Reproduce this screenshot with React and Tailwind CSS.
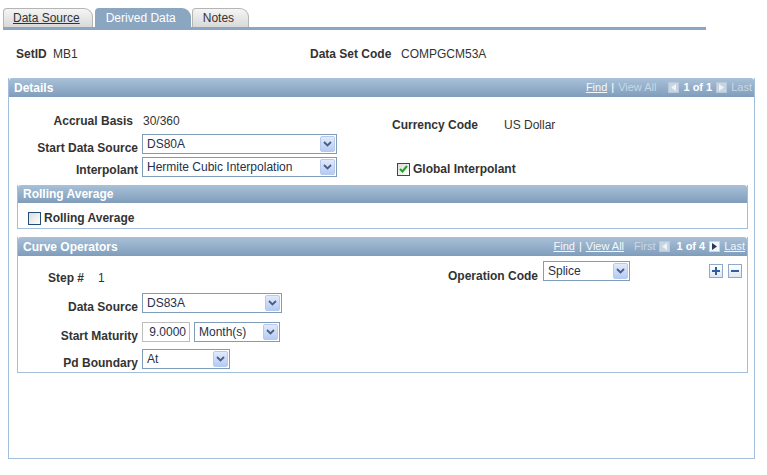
import React from "react";

// small dropdown chevron used in the select buttons
const Chevron = () => (
  <svg width="9" height="6" viewBox="0 0 9 6">
    <path d="M1 1 L4.5 4.5 L8 1" fill="none" stroke="#4b5f82" strokeWidth="1.8" />
  </svg>
);

const Select = ({ w, value }) => (
  <div className={`flex h-[20px] shrink-0 items-center justify-between border border-[#7f9db9] bg-white ${w}`}>
    <span className="pl-[4px] text-[12px] leading-[14px] text-[#26304a]">{value}</span>
    <span className="mr-[1px] flex h-[16px] w-[15px] items-center justify-center rounded-[2px] border border-[#b7c9ee] bg-linear-to-b from-[#e1eafd] to-[#b6cbf3]">
      <Chevron />
    </span>
  </div>
);

const CheckBox = ({ checked }) => (
  <span className="flex h-[13px] w-[13px] shrink-0 items-center justify-center border border-[#1f4e7a] bg-linear-to-br from-[#dcdcdc] to-[#ffffff]">
    {checked && (
      <svg width="9" height="8" viewBox="0 0 9 8">
        <path d="M1 4 L3.5 6.5 L8 1" fill="none" stroke="#22a322" strokeWidth="2" />
      </svg>
    )}
  </span>
);

const NavArrow = ({ dir, active }) => (
  <span
    className={`flex h-[11px] w-[11px] items-center justify-center border ${
      active ? "border-[#c9d7e6] bg-[#f4f7fb]" : "border-[#b9c9da] bg-[#c7d4e2]"
    }`}
  >
    <svg width="5" height="7" viewBox="0 0 5 7">
      {dir === "left" ? (
        <path d="M5 0 L0 3.5 L5 7 Z" fill={active ? "#243a5e" : "#eef3f8"} />
      ) : (
        <path d="M0 0 L5 3.5 L0 7 Z" fill={active ? "#243a5e" : "#eef3f8"} />
      )}
    </svg>
  </span>
);

const Header = ({ title, h, children }) => (
  <div className={`flex items-center justify-between rounded-t-[3px] bg-linear-to-b from-[#a9c1d8] to-[#7f9dbb] pl-[5px] pr-[2px] ${h}`}>
    <span className="text-[12px] font-bold text-white">{title}</span>
    {children}
  </div>
);

const Label = ({ w, pt, children }) => (
  <span className={`shrink-0 text-right text-[12px] font-bold leading-[14px] text-[#333] ${w} ${pt}`}>
    {children}
  </span>
);

export default function App() {
  return (
    <div className="h-[475px] w-[767px] overflow-hidden bg-white font-[Liberation_Sans,Arial,sans-serif] text-[12px] text-[#333]">
      {/* Tabs */}
      <div className="flex items-end gap-[2px] pl-[3px] pt-[8px]">
        <div className="flex h-[19px] items-center rounded-tl-[4px] rounded-tr-[9px] border border-b-0 border-[#b5b5b5] bg-linear-to-b from-[#f5f5f5] to-[#d9d9d9] pl-[9px] pr-[12px]">
          <span className="text-[12px] text-[#333] underline">Data Source</span>
        </div>
        <div className="flex h-[19px] items-center rounded-tl-[4px] rounded-tr-[9px] bg-[#8ba6c1] pl-[11px] pr-[15px]">
          <span className="text-[12px] text-white">Derived Data</span>
        </div>
        <div className="-ml-[1px] flex h-[19px] items-center rounded-tl-[4px] rounded-tr-[9px] border border-b-0 border-[#b5b5b5] bg-linear-to-b from-[#f5f5f5] to-[#d9d9d9] pl-[10px] pr-[14px]">
          <span className="text-[12px] text-[#333]">Notes</span>
        </div>
      </div>
      <div className="ml-[3px] h-[3px] w-[703px] bg-[#8ba6c1]" />

      {/* SetID row */}
      <div className="mt-[17px] flex pl-[16px] leading-[14px]">
        <span className="w-[37px] font-bold">SetID</span>
        <span className="w-[257px]">MB1</span>
        <span className="w-[91px] font-bold">Data Set Code</span>
        <span>COMPGCM53A</span>
      </div>

      {/* Details */}
      <div className="ml-[8px] mt-[17px] h-[381px] w-[747px] border border-t-0 border-[#a4bfdb]">
        <Header title="Details" h="h-[19px]">
          <div className="flex items-center gap-[4px] text-[11px] text-[#cad7e5]">
            <span className="text-[#f4f7fa] underline">Find</span>
            <span className="text-white">|</span>
            <span>View All</span>
            <span className="ml-[8px]"><NavArrow dir="left" /></span>
            <span className="font-bold text-white">1 of 1</span>
            <NavArrow dir="right" />
            <span>Last</span>
          </div>
        </Header>

        <div className="flex">
          {/* left column */}
          <div className="w-[328px]">
            <div className="mt-[17px] flex leading-[14px]">
              <Label w="w-[124px]">Accrual Basis</Label>
              <span className="ml-[10px]">30/360</span>
            </div>
            <div className="mt-[6px] flex h-[20px] items-start gap-[4px]">
              <Label w="w-[129px]" pt="pt-[7px]">Start Data Source</Label>
              <Select w="w-[195px]" value="DS80A" />
            </div>
            <div className="mt-[3px] flex h-[20px] items-start gap-[4px]">
              <Label w="w-[129px]" pt="pt-[6px]">Interpolant</Label>
              <Select w="w-[195px]" value="Hermite Cubic Interpolation" />
            </div>
          </div>
          {/* right column */}
          <div className="ml-[55px]">
            <div className="mt-[21px] flex leading-[14px]">
              <span className="w-[112px] font-bold">Currency Code</span>
              <span>US Dollar</span>
            </div>
            <div className="ml-[5px] mt-[30px] flex items-center gap-[3px] leading-[14px]">
              <CheckBox checked />
              <span className="font-bold">Global Interpolant</span>
            </div>
          </div>
        </div>

        {/* Rolling Average */}
        <div className="ml-[8px] mt-[8px] w-[731px] border border-t-0 border-[#a4bfdb]">
          <Header title="Rolling Average" h="h-[18px]" />
          <div className="mb-[3px] ml-[10px] mt-[8px] flex items-center gap-[3px] leading-[14px]">
            <CheckBox />
            <span className="font-bold">Rolling Average</span>
          </div>
        </div>

        {/* Curve Operators */}
        <div className="ml-[8px] mt-[8px] w-[731px] border border-t-0 border-[#a4bfdb] pb-[3px]">
          <Header title="Curve Operators" h="h-[19px]">
            <div className="flex items-center gap-[4px] text-[11px] text-[#cad7e5]">
              <span className="text-[#f4f7fa] underline">Find</span>
              <span className="text-white">|</span>
              <span className="text-[#f4f7fa] underline">View All</span>
              <span className="ml-[6px]">First</span>
              <NavArrow dir="left" />
              <span className="ml-[2px] font-bold text-white">1 of 4</span>
              <NavArrow dir="right" active />
              <span className="text-[#f4f7fa] underline">Last</span>
            </div>
          </Header>

          <div className="mt-[5px] flex h-[20px] items-start">
            <div className="flex w-[422px] pl-[30px] pt-[10px] leading-[14px]">
              <span className="w-[50px] font-bold">Step #</span>
              <span>1</span>
            </div>
            <Label w="w-[98px]" pt="pt-[8px]">Operation Code</Label>
            <div className="ml-[5px]">
              <Select w="w-[87px]" value="Splice" />
            </div>
            <div className="ml-[79px] mt-[3px] flex gap-[5px]">
              <span className="flex h-[14px] w-[14px] items-center justify-center border border-[#8fa9c6] bg-linear-to-b from-[#ffffff] to-[#dfe7f1]">
                <svg width="10" height="10" viewBox="0 0 10 10">
                  <path d="M5 1 V9 M1 5 H9" stroke="#2c5f9e" strokeWidth="2" />
                </svg>
              </span>
              <span className="flex h-[14px] w-[14px] items-center justify-center border border-[#8fa9c6] bg-linear-to-b from-[#ffffff] to-[#dfe7f1]">
                <svg width="10" height="10" viewBox="0 0 10 10">
                  <path d="M1 5 H9" stroke="#2c5f9e" strokeWidth="2" />
                </svg>
              </span>
            </div>
          </div>

          <div className="mt-[12px] flex h-[20px] items-start gap-[4px]">
            <Label w="w-[120px]" pt="pt-[7px]">Data Source</Label>
            <Select w="w-[140px]" value="DS83A" />
          </div>
          <div className="mt-[9px] flex h-[20px] items-start gap-[4px]">
            <Label w="w-[120px]" pt="pt-[7px]">Start Maturity</Label>
            <div className="flex h-[20px] w-[48px] items-center justify-end border border-[#bdbdbd] pr-[3px] text-[12px] text-[#26304a]">
              9.0000
            </div>
            <Select w="w-[86px]" value="Month(s)" />
          </div>
          <div className="mt-[7px] flex h-[20px] items-start gap-[4px]">
            <Label w="w-[120px]" pt="pt-[7px]">Pd Boundary</Label>
            <Select w="w-[88px]" value="At" />
          </div>
        </div>
      </div>
    </div>
  );
}
